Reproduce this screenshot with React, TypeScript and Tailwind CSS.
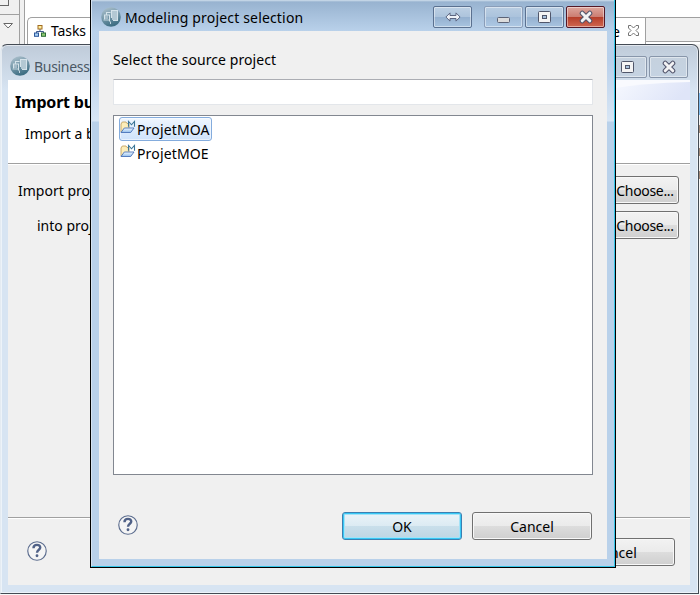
import React from "react";

const font = "font-['Noto_Sans','Open_Sans',sans-serif]";

function AppIcon({ className = "", id }: { className?: string; id: string }) {
  return (
    <svg className={className} width="20" height="20" viewBox="0 0 20 20">
      <defs>
        <linearGradient id={id} x1="0" y1="0" x2=".4" y2="1">
          <stop offset="0" stopColor="#b6c8d2" />
          <stop offset=".45" stopColor="#7f9fb0" />
          <stop offset="1" stopColor="#3f6f84" />
        </linearGradient>
      </defs>
      <circle cx="10" cy="10" r="9.8" fill={`url(#${id})`} />
      <path d="M11 3.500H16.500V13H11Z" fill="#b3c8d3" />
      <path d="M3.500 8.500H7V12H3.500Z" fill="#a3bac7" />
      <path d="M3.500 12.500V8H8.500V14.500M5.500 7.500V5.500H9.500M10.500 11V3.500H16.500V13.500H12" fill="none" stroke="#d5e3ea" strokeWidth="1.100" />
      <path d="M2.500 13H8M9.500 14.500V17" fill="none" stroke="#c2d5de" />
    </svg>
  );
}

function XIcon() {
  return (
    <svg width="16" height="14" viewBox="0 0 16 14">
      <path d="M4.200 3.200l7.600 7.600M11.800 3.200l-7.600 7.600" stroke="#50536a" strokeWidth="5" strokeLinecap="round" />
      <path d="M4.200 3.200l7.600 7.600M11.800 3.200l-7.600 7.600" stroke="#f2f2f4" strokeWidth="3" strokeLinecap="round" />
    </svg>
  );
}

function MaxIcon() {
  return (
    <svg width="13" height="12" viewBox="0 0 13 12">
      <rect x=".5" y=".5" width="12" height="11" rx="1" fill="#f4f4f4" stroke="#50566a" />
      <rect x="4.5" y="4.500" width="4" height="3" fill="#a9c2dc" stroke="#50566a" />
    </svg>
  );
}

function MinIcon() {
  return (
    <svg className="mt-[6px]" width="13" height="6" viewBox="0 0 13 6">
      <rect x=".5" y=".5" width="12" height="5" rx="1" fill="#dcdcdc" stroke="#5c6376" />
    </svg>
  );
}

function ResizeIcon() {
  return (
    <svg width="16" height="10" viewBox="0 0 16 10">
      <path d="M.9 5L5 .9V3.500H11V.9L15.100 5L11 9.100V6.500H5V9.100Z" fill="#eef2f8" stroke="#5c6580" />
    </svg>
  );
}

function HelpIcon() {
  return (
    <svg width="20" height="20" viewBox="0 0 21 21">
      <circle cx="10.500" cy="10.500" r="9.700" fill="#f5f5f5" stroke="#5b6c8e" strokeWidth="1.200" />
      <path d="M6.800 7.500C6.800 2.900 14.200 3.100 13.900 7C13.700 9.200 10.600 9.300 10.500 12.400" fill="none" stroke="#506187" strokeWidth="2.500" />
      <circle cx="10.500" cy="15.500" r="1.500" fill="#506187" />
    </svg>
  );
}

function FolderIcon({ id }: { id: string }) {
  return (
    <svg className="mb-[4px] shrink-0" width="16" height="14" viewBox="0 0 16 14">
      <defs>
        <linearGradient id={id} x1="0" y1="0" x2="0" y2="1">
          <stop offset="0" stopColor="#f2f9ff" />
          <stop offset="1" stopColor="#8fbdec" />
        </linearGradient>
      </defs>
      <path d="M1 12V4L2.300 2H6L7 3.500H9V8L3 11.500Z" fill="#fdeeb9" stroke="#c3a362" strokeWidth=".9" />
      <path d="M1 12.500L4.300 8H14L10.700 12.500Z" fill={`url(#${id})`} stroke="#4a72b8" strokeWidth=".9" />
      <path d="M8.500 6.800V1.500L11.500 4.800L14.500 1.500V6.800" fill="none" stroke="#3c7697" strokeWidth="1.100" />
    </svg>
  );
}

function TasksIcon() {
  return (
    <svg className="mb-[1px]" width="12" height="12" viewBox="0 0 12 12">
      <path d="M6 4v3M2.500 9V6.500h7V9" fill="none" stroke="#3d568a" />
      <rect x="4" y=".5" width="4" height="3.500" fill="#fff0a0" stroke="#a16b20" />
      <rect x=".5" y="8" width="4" height="3.300" fill="#a8d0f4" stroke="#2b579a" />
      <rect x="7.500" y="8" width="4" height="3.300" fill="#8fca70" stroke="#2d6d38" />
    </svg>
  );
}

const captionBase = "flex h-[22px] w-[39px] items-center justify-center rounded-[2px] border shadow-[inset_0_0_0_1px_rgba(255,255,255,0.45)]";
const captionActive = `${captionBase} border-[#5b7190] bg-[linear-gradient(#bdd0e4_0%,#adc4dc_48%,#94b0cf_50%,#a8c4e0_100%)]`;
const captionDim = `${captionBase} border-[#8a9db8] bg-[linear-gradient(#b9cde2_0%,#abc3dc_48%,#9fbad7_50%,#adc8e4_100%)]`;
const captionBack = `${captionBase} border-[#8896aa] bg-[linear-gradient(#c5d1de,#c5d3e2)]`;
const captionClose = `${captionBase} border-[#541827] bg-[linear-gradient(#dda69d_0%,#cc7e72_48%,#b53d29_50%,#cf6751_100%)]`;

function Button({ label, className, focus = false }: { label: string; className: string; focus?: boolean }) {
  const look = focus
    ? "border-[#3c7fb1] bg-[linear-gradient(#ebf3f8_0%,#dcebf3_49%,#c9dfeb_50%,#bdd5e3_100%)] shadow-[inset_0_0_0_1px_#37c8f5,inset_0_0_0_2px_#a5e2f7]"
    : "border-[#707070] bg-[linear-gradient(#f2f2f2_0%,#ebebeb_49%,#dddddd_50%,#cfcfcf_100%)] shadow-[inset_0_0_0_1px_#f8f8f8]";
  return (
    <button className={`flex h-[28px] items-center justify-center rounded-[3px] border pt-[2px] text-[14px] leading-[20px] ${look} ${className}`}>
      {label}
    </button>
  );
}

function Workbench() {
  return (
    <div className="flex h-[44px] bg-white">
      <div className="w-[20px] border-r border-[#a0a0a0] bg-[#f0f0f0]">
        <div className="h-[15px] border-b border-[#a0a0a0]">
          <div className="h-[6px] w-[9px] border-r border-b border-[#666]" />
        </div>
        <svg className="mt-[8px] ml-[3px]" width="11" height="6" viewBox="0 0 11 6">
          <path d="M.8.5H9.500L5.100 5Z" fill="white" stroke="#666" />
        </svg>
      </div>
      <div className="w-[5px] border-r border-[#a0a0a0] bg-[#f0f0f0]" />
      <div className="flex flex-1 items-end pl-[2px]">
        <div className="flex h-[27px] flex-1 items-center rounded-tl-[5px] border-t border-l border-[#a0a0a0] pl-[6px]">
          <TasksIcon />
          <span className="ml-[5px] text-[14px] leading-[20px] tracking-[-0.1px]">Tasks</span>
        </div>
        <div className="flex h-[27px] w-[34px] items-center border-t border-r border-[#a0a0a0]">
          <span className="w-[16px] text-[14px]">e</span>
          <svg className="mb-[1px] shrink-0" width="11" height="11" viewBox="0 0 11 11">
            <path d="M.5.5H3L5.500 3L8 .5H10.500V3L8 5.500L10.500 8V10.500H8L5.500 8L3 10.500H.5V8L3 5.500L.5 3Z" fill="white" stroke="#747474" />
          </svg>
        </div>
        <div className="mb-[2px] h-[25px] w-[54px] border-y border-[#a0a0a0] bg-[#f0f0f0]" />
      </div>
    </div>
  );
}

function ImportWindow() {
  return (
    <section className="absolute top-[44px] left-0 flex h-[550px] w-[699px] flex-col rounded-t-[7px] border border-[#444b54] border-l-[#e4ebf2] bg-[linear-gradient(#bfcbd9_0px,#d7e4f2_45px)] px-[7px] pb-[8px] shadow-[inset_0_0_0_1px_rgba(255,255,255,0.55)]">
      <header className="flex h-[35px] items-center">
        <AppIcon id="rear-orb" className="mt-[7px] ml-[2px]" />
        <span className="mt-[7px] ml-[4px] text-[14px] tracking-[-0.3px] text-[#4b5865]">Business</span>
        <div className="mt-[8px] mr-[3px] ml-auto flex gap-[2px]">
          <div className={captionBack}><MaxIcon /></div>
          <div className={captionBack}><XIcon /></div>
        </div>
      </header>
      <div className="flex w-[682px] flex-1 flex-col bg-[#f0f0f0]">
        <div className="flex h-[84px] shrink-0 border-b border-[#a0a0a0] bg-white">
          <div className="flex-1 pl-[7px]">
            <div className="pt-[10px] text-[16px] leading-[24px] font-bold tracking-[-0.2px]">Import bu</div>
            <div className="mt-[10px] pl-[10px] text-[14px] leading-[20px]">Import a b</div>
          </div>
          <svg width="82" height="20" viewBox="0 0 82 20">
            <defs>
              <linearGradient id="banner-wave" x1="0" y1="0" x2="1" y2=".2">
                <stop offset="0" stopColor="#f8faff" />
                <stop offset="1" stopColor="#dfe5f8" />
              </linearGradient>
            </defs>
            <path d="M0 0H82V20H0Z" fill="#f9fafe" />
            <path d="M0 20V9Q35 3 82 2V20Z" fill="url(#banner-wave)" />
          </svg>
        </div>
        <div className="flex h-[353px] shrink-0 justify-between border-t border-white pt-[11px]">
          <div className="w-[90px] text-[14px]">
            <div className="flex h-[28px] items-center pl-[10px] whitespace-nowrap">Import project</div>
            <div className="mt-[7px] flex h-[28px] items-center pl-[29px] whitespace-nowrap">into project</div>
          </div>
          <div className="mr-[11px] flex flex-col gap-[7px]">
            <Button label="Choose..." className="w-[68px] tracking-[-0.32px]" />
            <Button label="Choose..." className="w-[68px] tracking-[-0.32px]" />
          </div>
        </div>
        <div className="flex flex-1 justify-between border-t border-[#a0a0a0] shadow-[inset_0_1px_white]">
          <div className="mt-[23px] ml-[19px]"><HelpIcon /></div>
          <Button label="Cancel" className="mt-[20px] mr-[15px] w-[120px]" />
        </div>
      </div>
    </section>
  );
}

function SelectionWindow() {
  return (
    <section className="absolute top-0 left-[90px] h-[568px] w-[526px] border-r border-b border-l border-black">
      <div className="flex h-full flex-col border-r border-b border-l border-r-[#34c5e8] border-b-[#34c5e8] border-l-[#d5e3f1] bg-[linear-gradient(#d0dfed_0px,#98b3d0_2px,#bad2eb_32px,#b9d0ea_60px,#d8e6f5_121px,#b9d1ea_122px)] pr-[7px] pb-[7px] pl-[7px]">
        <header className="flex h-[31px] shrink-0 items-start">
          <AppIcon id="front-orb" className="mt-[7px] ml-[2px]" />
          <span className="mt-[8px] ml-[4px] text-[14px] leading-[20px] tracking-[0.17px]">Modeling project selection</span>
          <div className="mt-[6px] mr-[2px] ml-auto flex">
            <div className={captionActive}><ResizeIcon /></div>
            <div className="ml-[12px] flex gap-[2px]">
              <div className={captionDim}><MinIcon /></div>
              <div className={captionActive}><MaxIcon /></div>
              <div className={captionClose}><XIcon /></div>
            </div>
          </div>
        </header>
        <div className="flex w-[508px] flex-1 flex-col bg-[#f0f0f0] px-[14px] pt-[19px]">
          <label className="text-[14px] leading-[20px] tracking-[0.08px]">Select the source project</label>
          <input className="mt-[9px] block h-[26px] w-[480px] rounded-[1px] border border-[#e3e6ea] border-t-[#abadb3] bg-white outline-none" />
          <div className="mt-[10px] h-[360px] w-[480px] border border-[#828790] bg-white pt-[1px] pl-[5px] text-[14px] tracking-[0.15px]">
            <div className="flex h-[24px] w-[93px] items-center rounded-[3px] border border-[#84acdd] bg-[linear-gradient(#eff6fe,#cfe3fb)] shadow-[inset_0_0_0_1px_#ffffff80]">
              <FolderIcon id="folder-moa" /><span className="ml-[1px]">ProjetMOA</span>
            </div>
            <div className="flex h-[24px] w-[93px] items-center pl-[1px]">
              <FolderIcon id="folder-moe" /><span className="ml-[1px]">ProjetMOE</span>
            </div>
          </div>
          <div className="mt-[37px] flex">
            <div className="mt-[3px] ml-[5px] flex-1"><HelpIcon /></div>
            <Button label="OK" focus className="w-[120px]" />
            <Button label="Cancel" className="mr-[1px] ml-[10px] w-[120px]" />
          </div>
        </div>
      </div>
    </section>
  );
}

export default function App() {
  return (
    <main className={`relative h-[595px] w-[700px] overflow-hidden bg-[linear-gradient(#f0f0f0_93px,#7cbcf0_93px,#7cbcf0_115px,#f4f4f4_115px,#f4f4f4_125px,#a08878_125px,#a08878_133px,#f4f4f4_133px,#f4f4f4_148px,#a08878_148px,#a08878_156px,#f4f4f4_156px,#f4f4f4_171px,#a08878_171px,#a08878_179px,#f8f8f8_179px)] text-black ${font}`}>
      <Workbench />
      <ImportWindow />
      <SelectionWindow />
    </main>
  );
}
